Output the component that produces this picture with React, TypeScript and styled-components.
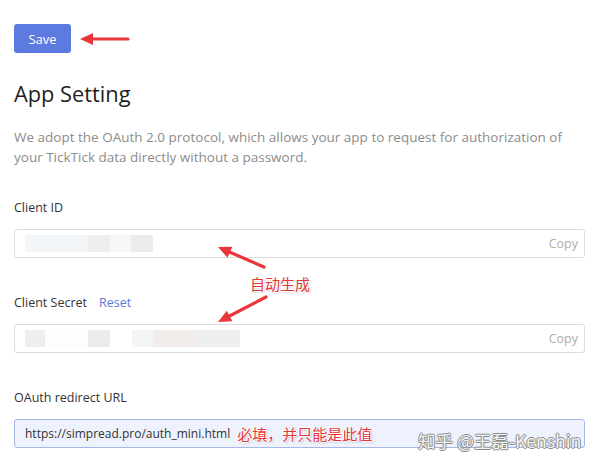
import React from "react";
import styled, { createGlobalStyle } from "styled-components";

const Global = createGlobalStyle`
  html, body { margin: 0; padding: 0; background: #fff; }
  body { font-family: "Open Sans", "Noto Sans CJK SC", sans-serif; color: #333; }
`;

const Page = styled.div`
  position: relative;
  width: 600px;
  height: 470px;
  box-sizing: border-box;
  padding: 24px 15px 0 14px;
  overflow: hidden;
`;

const SaveButton = styled.button`
  display: block;
  width: 57px;
  height: 29px;
  border: none;
  border-radius: 3px;
  background: #5d7ae0;
  color: #fff;
  font-family: "Open Sans", sans-serif;
  font-size: 13px;
  padding: 0;
`;

const Heading = styled.h1`
  margin: 27px 0 0;
  font-size: 21.8px;
  line-height: 28px;
  font-weight: 500;
  color: #1f1f1f;
`;

const Intro = styled.p`
  margin: 19px 0 0;
  font-size: 13.5px;
  line-height: 20px;
  color: #8c8c8c;
`;

const Field = styled.div<{ $first?: boolean }>`
  margin-top: ${(p) => (p.$first ? "31px" : "35px")};
`;

const Label = styled.div`
  display: flex;
  gap: 12px;
  font-size: 12.5px;
  line-height: 20px;
  color: #333;
`;

const LinkText = styled.span`
  color: #5b7bd5;
`;

const InputBox = styled.div<{ $active?: boolean }>`
  margin-top: 11px;
  height: 29px;
  box-sizing: border-box;
  display: flex;
  align-items: center;
  padding: 0 6px 0 10px;
  border: 1px solid ${(p) => (p.$active ? "#a8b8e6" : "#dcdcdc")};
  border-radius: 3px;
  background: ${(p) => (p.$active ? "#edf2fc" : "#fff")};
  font-size: 12px;
  color: #333;
`;

const Redacted = styled.div`
  display: flex;
  height: 17px;
`;

const Blur = styled.span<{ $w: number; $c: string }>`
  width: ${(p) => p.$w}px;
  background: ${(p) => p.$c};
`;

const CopyText = styled.span`
  margin-left: auto;
  color: #adadad;
  font-size: 12.5px;
`;

const Annotation = styled.span`
  font-family: "Noto Sans CJK SC", sans-serif;
  font-size: 15px;
  color: #e3363c;
  text-shadow: 1px 0 0 #fff, -1px 0 0 #fff, 0 1px 0 #fff, 0 -1px 0 #fff,
    1px 1px 2px rgba(0, 0, 0, 0.35);
`;

const InlineNote = styled(Annotation)`
  margin-left: 7px;
`;

const FloatNote = styled(Annotation)`
  position: absolute;
  left: 250px;
  top: 273px;
`;

const Watermark = styled.span`
  position: absolute;
  left: 418px;
  top: 428px;
  font-family: "Noto Sans CJK SC", sans-serif;
  font-size: 17.6px;
  color: #f4f4f4;
  text-shadow: 1px 0 0 #8a8a8a, -1px 0 0 #8a8a8a, 0 1px 0 #8a8a8a,
    0 -1px 0 #8a8a8a;
`;

const Overlay = styled.svg`
  position: absolute;
  left: 0;
  top: 0;
  pointer-events: none;
`;

const Arrow = ({ x1, y1, x2, y2 }: { x1: number; y1: number; x2: number; y2: number }) => {
  const ang = Math.atan2(y2 - y1, x2 - x1);
  const len = 13;
  const half = 6;
  const bx = x2 - Math.cos(ang) * len;
  const by = y2 - Math.sin(ang) * len;
  const px = -Math.sin(ang) * half;
  const py = Math.cos(ang) * half;
  return (
    <g>
      <line x1={x1} y1={y1} x2={bx} y2={by} stroke="#e8363b" strokeWidth={3.2} strokeLinecap="round" />
      <polygon points={`${x2},${y2} ${bx + px},${by + py} ${bx - px},${by - py}`} fill="#e8363b" />
    </g>
  );
};

export default function App() {
  return (
    <>
      <Global />
      <Page>
        <SaveButton>Save</SaveButton>
        <Heading>App Setting</Heading>
        <Intro>
          We adopt the OAuth 2.0 protocol, which allows your app to request for authorization of
          <br />
          your TickTick data directly without a password.
        </Intro>

        <Field $first>
          <Label>Client ID</Label>
          <InputBox>
            <Redacted>
              <Blur $w={63} $c="#f3f6f9" />
              <Blur $w={22} $c="#eeeeee" />
              <Blur $w={21} $c="#f7f7f7" />
              <Blur $w={22} $c="#ececec" />
            </Redacted>
            <CopyText>Copy</CopyText>
          </InputBox>
        </Field>

        <Field>
          <Label>
            Client Secret <LinkText>Reset</LinkText>
          </Label>
          <InputBox>
            <Redacted>
              <Blur $w={20} $c="#eceef0" />
              <Blur $w={43} $c="#fdfdfd" />
              <Blur $w={22} $c="#ebebeb" />
              <Blur $w={22} $c="#ffffff" />
              <Blur $w={21} $c="#f4f4f4" />
              <Blur $w={44} $c="#f1ece9" />
              <Blur $w={43} $c="#eeeeee" />
            </Redacted>
            <CopyText>Copy</CopyText>
          </InputBox>
        </Field>

        <Field>
          <Label>OAuth redirect URL</Label>
          <InputBox $active>
            https://simpread.pro/auth_mini.html
            <InlineNote>必填，并只能是此值</InlineNote>
          </InputBox>
        </Field>

        <FloatNote>自动生成</FloatNote>
        <Watermark>知乎 @王磊-Kenshin</Watermark>

        <Overlay width="600" height="470" viewBox="0 0 600 470">
          <Arrow x1={128} y1={39} x2={80} y2={39} />
          <Arrow x1={264} y1={267} x2={218} y2={247} />
          <Arrow x1={266} y1={297} x2={218} y2={322} />
        </Overlay>
      </Page>
    </>
  );
}
